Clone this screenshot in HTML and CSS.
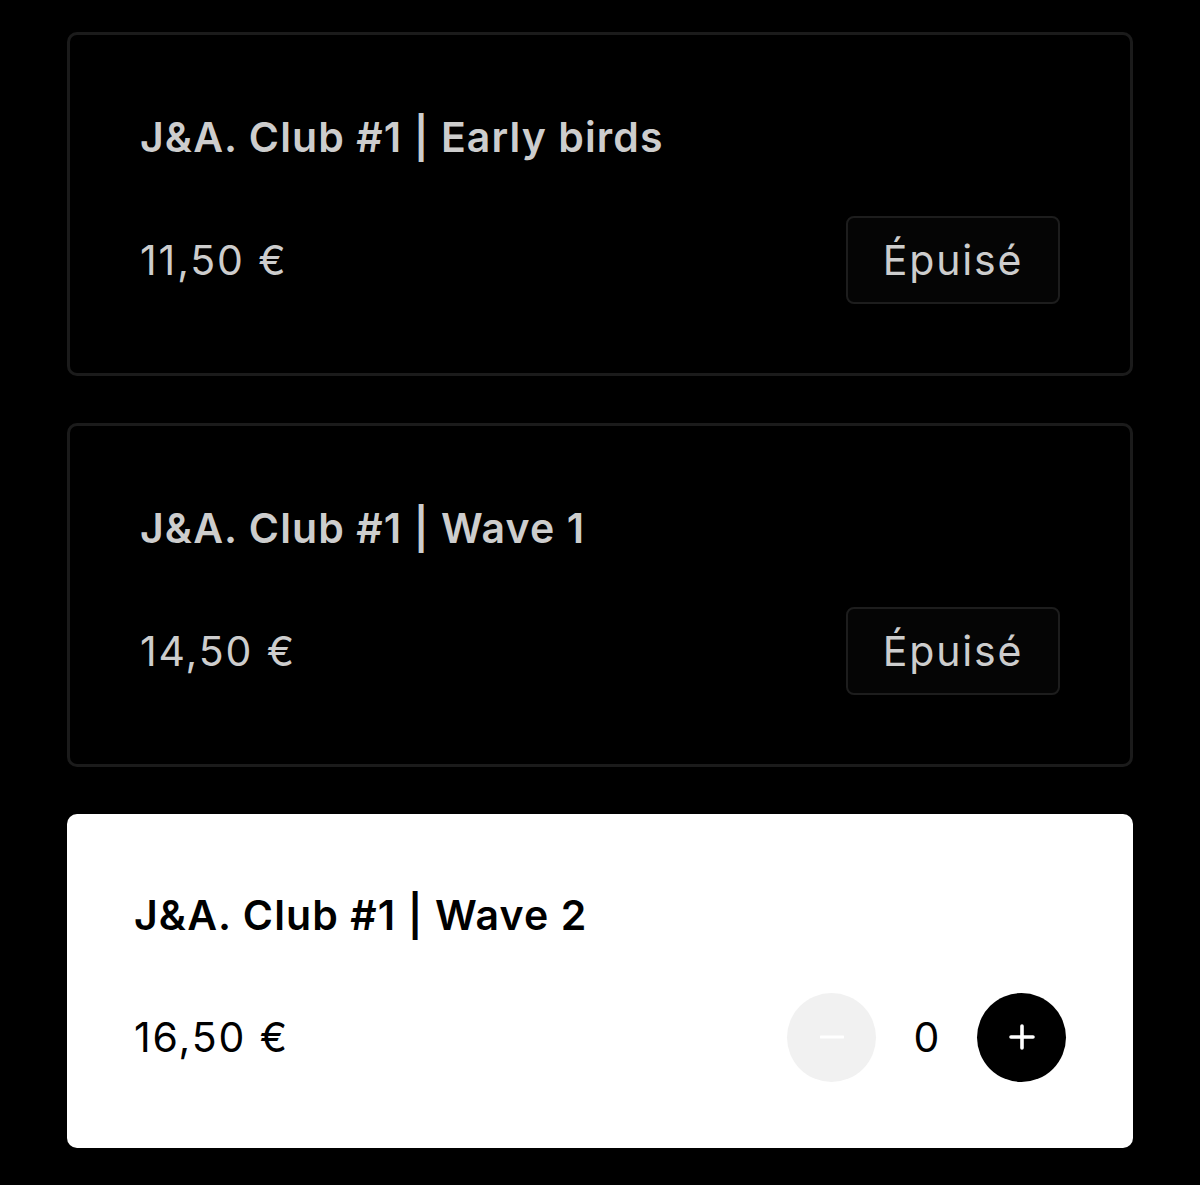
FILE: index.html
```html
<!DOCTYPE html>
<html lang="fr">
<head>
<meta charset="utf-8">
<link rel="stylesheet" href="styles.css">
</head>
<body>
<main class="list">
  <section class="ticket ticket--soldout">
    <h2 class="ticket__title">J&amp;A. Club #1 | Early birds</h2>
    <div class="ticket__row">
      <span class="ticket__price">11,50 €</span>
      <span class="soldout">Épuisé</span>
    </div>
  </section>
  <section class="ticket ticket--soldout">
    <h2 class="ticket__title">J&amp;A. Club #1 | Wave 1</h2>
    <div class="ticket__row">
      <span class="ticket__price">14,50 €</span>
      <span class="soldout">Épuisé</span>
    </div>
  </section>
  <section class="ticket ticket--active">
    <h2 class="ticket__title">J&amp;A. Club #1 | Wave 2</h2>
    <div class="ticket__row">
      <span class="ticket__price">16,50 €</span>
      <div class="qty">
        <button class="qty__btn qty__btn--minus" aria-label="Retirer">
          <svg width="24" height="24" viewBox="0 0 24 24"><path d="M1 12h22" stroke="#fff" stroke-width="3" stroke-linecap="round"/></svg>
        </button>
        <span class="qty__value">0</span>
        <button class="qty__btn qty__btn--plus" aria-label="Ajouter">
          <svg width="26" height="26" viewBox="0 0 26 26"><path d="M13 2v22M2 13h22" stroke="#fff" stroke-width="3.6" stroke-linecap="round"/></svg>
        </button>
      </div>
    </div>
  </section>
</main>
</body>
</html>
```
FILE: styles.css
```css
* { box-sizing: border-box; }
html, body {
  margin: 0;
  background: #000;
}
body {
  font-family: Inter, "Noto Sans", sans-serif;
}
.list {
  display: flex;
  flex-direction: column;
  gap: 47px;
  padding: 32px 67px 0 67px;
}
.ticket {
  border-radius: 10px;
  display: flex;
  flex-direction: column;
  gap: 55px;
}
.ticket--soldout {
  background: #000;
  border: 3px solid #1b1b1b;
  padding: 78px 70px 69px 70px;
  color: #cdcdcd;
}
.ticket--active {
  background: #fff;
  color: #000;
  padding: 77px 67px 67px 67px;
  gap: 54px;
}
.ticket__title {
  margin: 0;
  font-size: 41px;
  line-height: 48px;
  font-weight: 600;
  letter-spacing: 1.1px;
}
.ticket__row {
  display: flex;
  align-items: center;
  justify-content: space-between;
  height: 88px;
}
.ticket__price {
  font-size: 41px;
  font-weight: 400;
  letter-spacing: 1.9px;
}
.soldout {
  display: flex;
  align-items: center;
  justify-content: center;
  width: 214px;
  height: 88px;
  border: 2px solid #1d1d1d;
  border-radius: 8px;
  background: #050505;
  font-size: 41px;
  letter-spacing: 1.8px;
  color: #cdcdcd;
}
.qty {
  display: flex;
  align-items: center;
}
.qty__btn {
  width: 89px;
  height: 89px;
  border-radius: 50%;
  border: none;
  padding: 0;
  display: flex;
  align-items: center;
  justify-content: center;
}
.qty__btn--minus { background: #f1f1f1; }
.qty__btn--plus { background: #000; }
.qty__value {
  width: 101px;
  text-align: center;
  font-size: 41px;
  color: #000;
}
```
